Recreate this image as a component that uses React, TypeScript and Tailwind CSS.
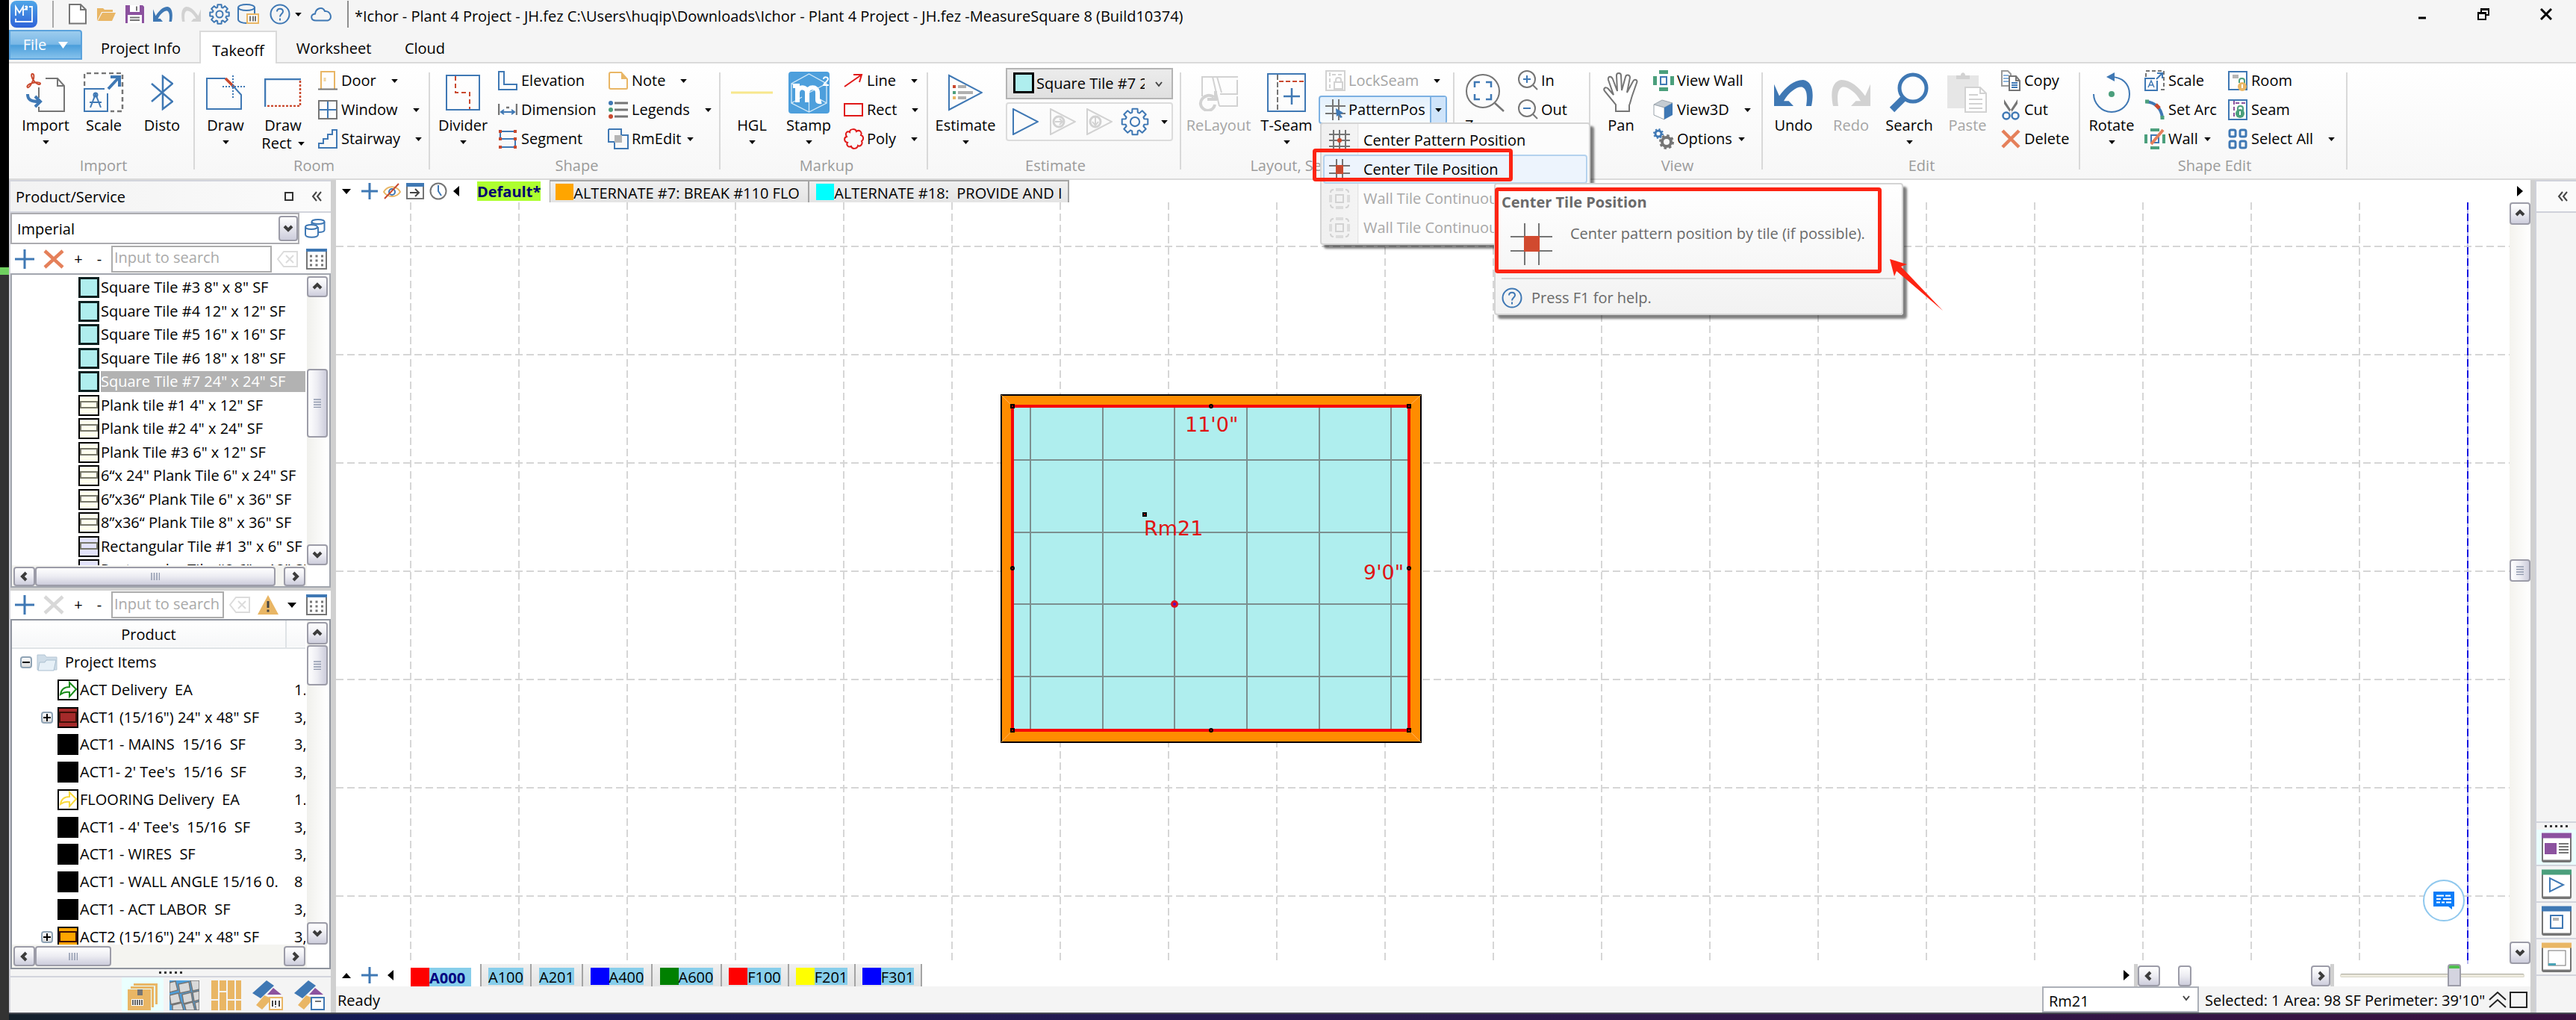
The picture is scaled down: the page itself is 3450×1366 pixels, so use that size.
import React from "react";
import clsx from "clsx";

const BLUE = "#3f78b4";
const GRAY = "#757575";
const RED = "#c9492e";
const TAN = "#e9b665";
const GREEN = "#4b9f7c";
const PURPLE = "#8c529f";
const PALE = "#d2d2d2";

type Kids = { children?: React.ReactNode };

function Icon({ w, h, children }: { w: number; h: number } & Kids) {
  return (
    <svg width={w} height={h} viewBox={`0 0 ${w} ${h}`} fill="none" stroke={BLUE} strokeWidth={2} aria-hidden="true" className="shrink-0">
      {children}
    </svg>
  );
}

function Caret({ dir = "down", big = false }: { dir?: "down" | "up" | "left" | "right"; big?: boolean }) {
  const d = { down: "M0 0H12L6 7Z", up: "M0 7H12L6 0Z", left: "M8 0V14L0 7Z", right: "M0 0V14L8 7Z" }[dir];
  const side = dir === "left" || dir === "right";
  const w = side ? 8 : 12;
  const h = side ? 14 : 7;
  return (
    <svg
      viewBox={`0 0 ${w} ${h}`}
      width={big || side ? w : 9}
      height={big || side ? h : 5}
      fill="black"
      aria-hidden="true"
      className="shrink-0"
    >
      <path d={d} />
    </svg>
  );
}

/* ---------- title bar icons ---------- */

const Logo = () => (
  <svg width="36" height="36" viewBox="0 0 36 36" aria-hidden="true" className="shrink-0">
    <defs>
      <linearGradient id="logo" x1="0" y1="0" x2="0" y2="1">
        <stop offset="0" stopColor="#4fa6e8" />
        <stop offset="1" stopColor="#2f63d8" />
      </linearGradient>
    </defs>
    <rect width="36" height="36" rx="8" fill="url(#logo)" />
    <path d="M7 20V8l5 8 5-8v12M25 8h4v20H7v-4M19.500 8.500q2-2 3 0 0 1-3 3h3.500" fill="none" stroke="white" strokeWidth="1.800" />
  </svg>
);
const NewFile = () => (
  <Icon w={24} h={28}>
    <path d="M1 1h15l7 7v18.500H1ZM16 1v7h7" stroke={GRAY} fill="white" />
  </Icon>
);
const OpenFolder = () => (
  <Icon w={27} h={20}>
    <path d="M1 19V2h8l2 2h11v3H7Z" fill={TAN} stroke="none" />
    <path d="M8 8h18l-5 11H2Z" fill={TAN} stroke="none" />
  </Icon>
);
const Save = () => (
  <Icon w={25} h={26}>
    <path d="M0 1h23l2 2v22H0Z" fill={PURPLE} stroke="none" />
    <path d="M6 1h13v9H6ZM3 14h19v11H3Z" fill="white" stroke="none" />
    <path d="M15 2.500v6M6 17.500h13M6 21h13" stroke={GRAY} />
  </Icon>
);
const CurvedArrow = ({ color, flip, w = 26, h = 20 }: { color: string; flip?: boolean; w?: number; h?: number }) => (
  <svg width={w} height={h} viewBox="0 0 26 18" preserveAspectRatio="none" aria-hidden="true" className={clsx("shrink-0", flip && "-scale-x-100")}>
    <path d="M0 3v15h13l-3.200-3.500-3.300 0C10 8 16 4 19 5c3 1.500 3.500 6 2.500 13H25C27 8 25.500 1 19.500 0 13 0 8 5 3.500 11Z" fill={color} />
  </svg>
);
const GearIcon = ({ size = 28, sw = 2 }: { size?: number; sw?: number }) => {
  const pts: string[] = [];
  for (let i = 0; i < 8; i++) {
    const a = (i * Math.PI) / 4;
    [[-0.3, 9.5], [-0.2, 13], [0.2, 13], [0.3, 9.5]].forEach(([o, r]) => {
      pts.push(`${(14 + r * Math.sin(a + o)).toFixed(2)} ${(14 - r * Math.cos(a + o)).toFixed(2)}`);
    });
  }
  return (
    <svg width={size} height={size} viewBox="0 0 28 28" fill="none" stroke={BLUE} strokeWidth={sw} strokeLinejoin="round" aria-hidden="true" className="shrink-0">
      <path d={`M${pts.join("L")}Z`} />
      <circle cx="14" cy="14" r="4.500" />
    </svg>
  );
};
const DbBar = () => (
  <Icon w={29} h={28}>
    <ellipse cx="12" cy="5" rx="11" ry="4" />
    <path d="M1 5v16c0 3 5 5 11 5M23 5v8" />
    <rect x="13" y="14" width="15" height="12" stroke={TAN} fill="white" />
    <path d="M17 16.500v7M21 16.500v7M24 16.500v7" stroke="#444" strokeWidth="1.500" />
  </Icon>
);
const HelpIcon = () => (
  <Icon w={28} h={28}>
    <circle cx="14" cy="14" r="12.500" />
    <path d="M10 10.500c0-5 8-5 8 0 0 3-4 3-4 7M14 19.500v3" />
  </Icon>
);
const CloudIcon = () => (
  <Icon w={29} h={20}>
    <path d="M7 18.500c-7 0-8-8-1-9C7 2 16-1 19 6c8-1 11 11 4 12.500Z" />
  </Icon>
);

/* ---------- ribbon icons, large ---------- */

const big = {
  import: (
    <Icon w={52} h={54}>
      <path d="M26 8h16l9 10v34H17V46M42 8v10h9M17 20v14" stroke={GRAY} />
      <path d="M8 2c3-1 3 5 1 9-2 5-5 10-7 9s1-5 7-6c5-1 10-1 10 1s-5 1-8-3c-3-3-5-9-3-10Z" stroke={RED} />
      <path d="M2 29c0 8 5 10 15 10M12 32l7 7-7 7" stroke={BLUE} strokeWidth="4" />
    </Icon>
  ),
  scale: (
    <Icon w={54} h={54}>
      <path d="M1 18V1h51v51H36" stroke={GRAY} strokeWidth="2.500" strokeDasharray="6 4" />
      <path d="M28 22H1v30h31V28" />
      <path d="M33 22 46 8M36 6h12v13" strokeWidth="4" />
      <path d="m9 47 7-18 7 18M8 40h16" />
      <circle cx="16" cy="30" r="2.500" />
    </Icon>
  ),
  disto: (
    <Icon w={30} h={48}>
      <path d="M1 12 29 36 16 46V2l13 10L1 36" strokeWidth="2.500" />
    </Icon>
  ),
  draw: (
    <Icon w={52} h={48}>
      <path d="M26 5H1v41h46V27L36 15" />
      <path d="m26 5 11 11" stroke={RED} strokeWidth="3.500" />
      <path d="M36 1v30M22 16h30" strokeDasharray="2 2" />
    </Icon>
  ),
  drawRect: (
    <Icon w={50} h={38}>
      <path d="M1 38V1h48" strokeWidth="2.500" />
      <path d="M48 3v34H2" stroke={RED} strokeWidth="2.500" strokeDasharray="3 2" />
    </Icon>
  ),
  divider: (
    <Icon w={46} h={48}>
      <rect x="1" y="1" width="44" height="46" />
      <path d="M13 2v22h19v22" stroke={RED} strokeDasharray="6 4" />
    </Icon>
  ),
  hgl: (
    <Icon w={56} h={4}>
      <path d="M0 2h56" stroke="#f7e78c" strokeWidth="3" />
    </Icon>
  ),
  stamp: (
    <svg width="55" height="56" viewBox="0 0 55 56" aria-hidden="true">
      <rect width="55" height="56" rx="4" fill="#4d9fdc" />
      <path d="M27.500 3 51 16v26L27.500 54 4 42V16ZM4 16l23.500 12L51 16M27.500 28v26M4 42l14-8M51 42l-14-8" fill="none" stroke="#d6ebf9" strokeWidth="1.300" />
      <path d="M6 19h6v22M12 28c1-9 13-9 13 0v13M25 28c1-9 14-9 14 0v10q0 3 5 2" fill="none" stroke="white" strokeWidth="6" />
      <path d="M47 10c0-4 6-3 6 0 0 2-5 5-6 8h7" fill="none" stroke="white" strokeWidth="2" />
    </svg>
  ),
  estimate: (
    <Icon w={46} h={50}>
      <path d="M1 2v46l44-23Z" />
      <path d="M6 17h4" stroke={RED} strokeWidth="4" />
      <path d="M6 25h4" stroke={GREEN} strokeWidth="4" />
      <path d="M6 32h4" stroke={TAN} strokeWidth="4" />
      <path d="M13 17h11M13 25h20M13 32h11" stroke="#b0b0b0" strokeWidth="4" />
    </Icon>
  ),
  relayout: (
    <Icon w={56} h={50}>
      <path d="M6 30V4h48M20 4l9 39M30 27h23V8M26 4l6 21M29 43h25M53 30v13" stroke={PALE} />
      <path d="M22 31c-12-8-25 8-14 16 7 5 14 0 15-6M13 34h11V23" stroke={PALE} strokeWidth="4" />
    </Icon>
  ),
  tseam: (
    <Icon w={52} h={52}>
      <rect x="1" y="1" width="50" height="50" />
      <path d="M14 2v48" stroke={GRAY} strokeDasharray="7 3" />
      <path d="M16 11h35" stroke={RED} strokeDasharray="6 3" />
      <path d="M22 31h22M33 20v22" strokeWidth="2.500" />
    </Icon>
  ),
  zoom: (
    <Icon w={54} h={54}>
      <circle cx="24" cy="25" r="22" stroke={GRAY} />
      <path d="m40 41 12 11" stroke={GRAY} strokeWidth="2.500" />
      <path d="M13 20v-7h7M28 13h7v7M35 29v7h-7M20 36h-7v-7" strokeWidth="2.500" />
    </Icon>
  ),
  pan: (
    <Icon w={50} h={54}>
      <path
        d="M18 52V43L4 26c-4-4 0-8 4-4l7 8L8 10c-1-5 4-6 6-1l6 16L19 4c0-4 6-4 6 0l1 20L31 6c1-4 6-3 6 1l-4 20 8-15c2-4 7-2 5 2l-6 17c-2 6-2 8-4 13v8Z"
        stroke={GRAY}
        fill="white"
      />
    </Icon>
  ),
  search: (
    <Icon w={54} h={54}>
      <circle cx="32" cy="21" r="18" strokeWidth="5" />
      <path d="M20 34 4 50" strokeWidth="9" />
    </Icon>
  ),
  paste: (
    <Icon w={54} h={54}>
      <path d="M0 4h42v44H0Z" fill="#e6e6e6" stroke="none" />
      <path d="M12 9V4h6c0-5 6-5 6 0h6v5Z" fill={PALE} stroke="none" />
      <path d="M24 20h20l8 8v25H24ZM44 20v8h8M29 30h12M29 36h18M29 42h18M29 48h18" stroke={PALE} fill="white" />
    </Icon>
  ),
  rotate: (
    <Icon w={50} h={54}>
      <path d="M1 29C1 41 11 53 25 53c13 0 24-10 24-24C49 15 39 6 24 6" />
      <path d="M29 0v12l-11-6Z" fill={BLUE} stroke="none" />
      <circle cx="25" cy="29" r="4" fill={GREEN} stroke="none" />
    </Icon>
  ),
};

/* ---------- ribbon icons, small ---------- */

const cross = (c: string, w = 26) => (
  <Icon w={w} h={26}>
    <path d={`M2 2 ${w - 2} 24M${w - 2} 2 2 24`} stroke={c} strokeWidth="4.500" />
  </Icon>
);

const hash = (
  <g stroke={GRAY}>
    <path d="M10 0v28M18 0v28M0 9h28M0 19h28" />
  </g>
);

const small = {
  door: (
    <Icon w={26} h={26}>
      <path d="M4 24V1h18v23" stroke={TAN} />
      <path d="M9 9v5" stroke="#f0d5a2" strokeWidth="3" />
      <path d="M0 24.500h26" stroke={GRAY} />
    </Icon>
  ),
  window: (
    <Icon w={26} h={26}>
      <path d="M13 1v24M1 13h24" />
      <rect x="1" y="1" width="24" height="24" stroke={GRAY} />
    </Icon>
  ),
  stair: (
    <Icon w={26} h={26}>
      <path d="M1 25V19h6v-6h6V7h6V1h6v24Z" />
    </Icon>
  ),
  elevation: (
    <Icon w={26} h={26}>
      <path d="M1 1h7v17h17v7H1Z" />
    </Icon>
  ),
  dimension: (
    <Icon w={26} h={16}>
      <path d="M1 0v15M25 0v15M11 5h4" stroke={GRAY} strokeWidth="2.500" />
      <path d="M5 11h16M8 8l-4 3 4 3M18 8l4 3-4 3" />
    </Icon>
  ),
  segment: (
    <Icon w={26} h={26}>
      <path d="M23 3H3v10h20v11H3" />
      <path d="M1 3h4M21 3h4M1 13h4M21 13h4M1 24h4M21 24h4" stroke={RED} strokeWidth="4" />
    </Icon>
  ),
  note: (
    <Icon w={26} h={24}>
      <path d="M4 1h13l8 9v12a1 1 0 0 1-1 1H3a2 2 0 0 1-2-2V3a2 2 0 0 1 2-2Z" stroke={TAN} />
      <path d="M17 1v9h8Z" fill={TAN} stroke="none" />
    </Icon>
  ),
  legends: (
    <Icon w={26} h={26}>
      <path d="M8 4h18M8 13h18M8 22h18" stroke={GRAY} strokeWidth="3" />
      <circle cx="3" cy="4" r="3" fill={BLUE} stroke="none" />
      <circle cx="3" cy="13" r="3" fill={GREEN} stroke="none" />
      <circle cx="3" cy="22" r="3" fill={RED} stroke="none" />
    </Icon>
  ),
  rmedit: (
    <Icon w={28} h={28}>
      <path d="M1 1h17v8M1 1v17h8M18 9h9v18H9v-9" />
      <rect x="9" y="9" width="10" height="10" fill="#b5b5b5" stroke="none" />
    </Icon>
  ),
  line: (
    <Icon w={26} h={20}>
      <path d="M1 18 24 2M13 2h11l-3 10" stroke="#e01818" />
    </Icon>
  ),
  rect: (
    <Icon w={26} h={20}>
      <rect x="1" y="2" width="24" height="16" stroke="#e01818" />
    </Icon>
  ),
  poly: (
    <Icon w={28} h={28}>
      <path
        d="M9 5c0-5 8-5 9-1 4-3 8 1 6 5 4 1 4 6 1 8 2 4-2 8-5 6-1 5-8 5-9 1-4 2-7-2-5-5-5-1-5-7-1-8-3-5 1-8 4-6Z"
        stroke="#e01818"
      />
    </Icon>
  ),
  lock: (
    <Icon w={27} h={28}>
      <rect x="1" y="1" width="25" height="26" stroke={PALE} />
      <path d="M6 3v22M9 6h15" stroke={PALE} strokeDasharray="5 3" />
      <path d="M12 16h11v9H12ZM14 16v-3c0-4 7-4 7 0v3" stroke={PALE} />
    </Icon>
  ),
  pattern: (
    <Icon w={27} h={28}>
      {hash}
      <path d="m14 12 10 6-4 2 3 4-3 1-2-4-3 2Z" fill={BLUE} stroke="none" />
    </Icon>
  ),
  centerPattern: (
    <Icon w={28} h={28}>
      <path d="M6 0v28M14 0v28M22 0v28M0 6h28M0 14h28M0 22h28" stroke={GRAY} />
      <circle cx="14" cy="14" r="3" fill={RED} stroke="none" />
    </Icon>
  ),
  centerTile: (
    <Icon w={28} h={28}>
      {hash}
      <rect x="9" y="8" width="10" height="12" fill={RED} stroke="none" />
    </Icon>
  ),
  wallTile: (
    <Icon w={28} h={28}>
      <rect x="9" y="9" width="10" height="10" stroke={PALE} />
      <path d="M9 2h10M9 26h10M2 9v10M26 9v10" stroke="#dcdcdc" strokeWidth="4" />
      <path d="M2 6c0-3 2-4 4-4M22 2c3 0 4 2 4 4M26 22c0 3-2 4-4 4M6 26c-3 0-4-2-4-4" stroke={PALE} />
    </Icon>
  ),
  zoomIn: (
    <Icon w={27} h={28}>
      <circle cx="12" cy="12" r="11" stroke={GRAY} />
      <path d="m20 20 6 6" stroke={GRAY} />
      <path d="M7 12h10M12 7v10" />
    </Icon>
  ),
  zoomOut: (
    <Icon w={27} h={28}>
      <circle cx="12" cy="12" r="11" stroke={GRAY} />
      <path d="m20 20 6 6" stroke={GRAY} />
      <path d="M7 12h10" />
    </Icon>
  ),
  viewWall: (
    <Icon w={28} h={28}>
      <rect x="10" y="9" width="8" height="10" />
      <path d="M8 2.500h12M8 25.500h12" stroke={GREEN} strokeWidth="5" />
      <path d="M2.500 8v12M25.500 8v12" stroke={GREEN} strokeWidth="5" />
    </Icon>
  ),
  view3d: (
    <Icon w={28} h={28}>
      <path d="M1 7 12 1l14 4-11 6Z" fill="#c5ccd2" stroke="#9aa4ac" strokeWidth="1" />
      <path d="M1 7l14 4v16L1 21Z" fill="white" stroke="#9aa4ac" strokeWidth="1" />
      <path d="M15 11 26 5v16l-11 6Z" fill={BLUE} stroke="none" />
    </Icon>
  ),
  options: (
    <Icon w={28} h={28}>
      <circle cx="7" cy="7" r="4" strokeWidth="3" />
      <circle cx="7" cy="7" r="6" strokeWidth="2" strokeDasharray="2 2.700" />
      <circle cx="18" cy="18" r="6" stroke={GRAY} strokeWidth="4" />
      <circle cx="18" cy="18" r="8.500" stroke={GRAY} strokeWidth="3" strokeDasharray="3.400 3.275" />
    </Icon>
  ),
  copy: (
    <Icon w={27} h={28}>
      <path d="M1 1h8l4 4v16H1Z" stroke="#9a9a9a" fill="white" />
      <path d="M3 7h7M3 11h7M3 15h7" stroke="#8db4dc" />
      <path d="M11 8h9l5 6v13H11ZM20 8v6h5" stroke={GRAY} fill="white" />
      <path d="M14 17h8M14 20h8M14 23h8" />
    </Icon>
  ),
  cut: (
    <Icon w={26} h={28}>
      <path d="M4 0v6l9 13 2-2ZM22 0v6l-9 13-2-2Z" fill={GRAY} stroke="none" />
      <circle cx="7" cy="22" r="4.500" strokeWidth="2.500" />
      <circle cx="19" cy="22" r="4.500" strokeWidth="2.500" />
    </Icon>
  ),
  scale: (
    <Icon w={28} h={28}>
      <path d="M2 9V1h24v25h-7" stroke={GRAY} strokeDasharray="5 3" />
      <path d="M14 11H1v16h16V14M16 12l8-8M17 4h7v7" />
      <path d="m5 23 4-9 4 9M6.500 20h5" strokeWidth="1.500" />
    </Icon>
  ),
  arc: (
    <Icon w={28} h={28}>
      <path d="M2 3c12 1 21 9 22 22" strokeWidth="4" />
      <path d="M1 3h5M24 22v5" stroke={GREEN} strokeWidth="5" />
      <path d="m15 7 5 5" stroke={RED} strokeWidth="5" />
    </Icon>
  ),
  wall: (
    <Icon w={28} h={28}>
      <rect x="9" y="9" width="10" height="10" />
      <path d="M8 2h12M8 26h12" stroke={GREEN} strokeWidth="4" />
      <path d="M2 8v12M26 8v12" stroke={GREEN} strokeWidth="4" />
      <path d="M9 21 25 2" stroke="#e5805a" strokeWidth="4" />
    </Icon>
  ),
  room: (
    <Icon w={26} h={28}>
      <rect x="1" y="2" width="24" height="24" />
      <rect x="6" y="6" width="8" height="5" fill="#b5b5b5" stroke="none" />
      <path d="M15 17v-3c0-4 7-4 7 0v4" stroke={GREEN} />
      <circle cx="19" cy="22" r="6" fill={TAN} stroke="none" />
      <path d="M19 19v5" stroke="white" />
    </Icon>
  ),
  seam: (
    <Icon w={26} h={28}>
      <rect x="1" y="1" width="24" height="26" />
      <path d="M8 2v24M10 5h14" stroke={PURPLE} strokeDasharray="5 3" />
      <path d="M13 15v-3c0-4 7-4 7 0v4" stroke={GREEN} />
      <circle cx="16" cy="19" r="6" fill={GREEN} stroke="none" />
      <path d="M16 16v5" stroke="white" />
    </Icon>
  ),
  selectAll: (
    <Icon w={28} h={28}>
      <g strokeWidth="3">
        <rect x="3" y="2" width="8" height="9" rx="2" />
        <rect x="17" y="2" width="8" height="9" rx="2" />
        <rect x="3" y="17" width="8" height="9" rx="2" />
        <rect x="17" y="17" width="8" height="9" rx="2" />
      </g>
    </Icon>
  ),
};

/* ---------- ribbon parts ---------- */

function Group({ label, className, labelClass, children }: { label?: string; className?: string; labelClass?: string } & Kids) {
  return (
    <>
      <section className={clsx("flex shrink-0 flex-col pt-1", className)}>
        <div className="flex h-[119px]">{children}</div>
        <div className={clsx("h-7 text-center leading-7 text-[#9b9b9b]", labelClass)}>{label}</div>
      </section>
      <div className="my-3 w-0.5 shrink-0 bg-[#d9d9d9]" />
    </>
  );
}

function Big({ icon, label, second, caret, className, muted }: { icon: React.ReactNode; label: string; second?: string; caret?: boolean; className: string; muted?: boolean }) {
  return (
    <button className={clsx("flex shrink-0 flex-col items-center pt-[5px]", className, muted && "text-[#a5a5a5]")}>
      <span className="flex h-15 items-center justify-center">{icon}</span>
      <span className="leading-7">{label}</span>
      {second && (
        <span className="flex items-center gap-2 leading-5">
          {second}
          <Caret />
        </span>
      )}
      {caret && (
        <span className="flex h-4 items-center">
          <Caret />
        </span>
      )}
    </button>
  );
}

function Small({ icon, label, caret, muted }: { icon: React.ReactNode; label: string; caret?: "near" | "far"; muted?: boolean }) {
  return (
    <button className={clsx("flex h-[38px] items-center whitespace-nowrap", muted && "text-[#a5a5a5]")}>
      <span className="mr-1 flex w-7 shrink-0 items-center justify-center">{icon}</span>
      {label}
      {caret && (
        <span className={caret === "near" ? "ml-2" : "ml-5"}>
          <Caret />
        </span>
      )}
    </button>
  );
}

const Col = ({ className, children }: { className?: string } & Kids) => <div className={clsx("flex shrink-0 flex-col items-start gap-px", className)}>{children}</div>;

function PatternMenu() {
  const items = [
    { icon: small.centerPattern, label: "Center Pattern Position" },
    { icon: small.centerTile, label: "Center Tile Position", active: true },
    { icon: small.wallTile, label: "Wall Tile Continuous", off: true },
    { icon: small.wallTile, label: "Wall Tile Continuous", off: true },
  ];
  return (
    <div className="absolute top-full left-0 z-20 w-[362px] rounded-sm border-2 border-[#d4d4d4] bg-[linear-gradient(to_right,#f0f0f0_0px,#f4f4f4_48px,#dcdcdc_48px,#fcfcfc_50px)] shadow-[5px_5px_3px_rgba(0,0,0,0.5)]">
      <ul className="p-0.5">
        {items.map((it, i) => (
          <li key={i} className="relative">
            <button
              disabled={it.off}
              className={clsx(
                "flex h-[39px] w-full items-center rounded-sm border-2 pl-1.5 whitespace-nowrap",
                it.active ? "border-[#b4d2ee] bg-[#edf4fd]" : "border-transparent",
                it.off && "text-[#a8a8a8]",
              )}
            >
              <span className="mr-[18px]">{it.icon}</span>
              {it.label}
            </button>
            {it.active && <div className="pointer-events-none absolute -top-2 -left-3.5 h-11 w-[268px] rounded-sm border-[5px] border-[#fd2413]" />}
          </li>
        ))}
      </ul>
      <PatternTooltip />
    </div>
  );
}

function PatternTooltip() {
  return (
    <div
      role="tooltip"
      className="absolute top-[79px] left-[231px] w-[548px] rounded-sm border-2 border-[#d4d4d4] bg-linear-to-b from-white to-[#f2f2f2] text-[#6a6a6a] shadow-[5px_5px_3px_rgba(0,0,0,0.5)]"
    >
      <div className="h-[125px] px-2 pt-2.5">
        <p className="leading-7 font-bold">Center Tile Position</p>
        <div className="flex items-start px-3 pt-3.5">
          <Icon w={56} h={56}>
            <path d="M19 0v56M38 0v56M0 18h56M0 37h56" stroke={GRAY} />
            <rect x="18" y="17" width="21" height="21" fill="#d14a2f" stroke="none" />
          </Icon>
          <span className="ml-6 leading-7 whitespace-nowrap">Center pattern position by tile (if possible).</span>
        </div>
      </div>
      <div className="mx-2 border-t-2 border-[#d6d6d6]" />
      <div className="flex h-[46px] items-center gap-3 px-2 pt-1">
        <HelpIcon />
        Press F1 for help.
      </div>
      <div className="pointer-events-none absolute top-1 -left-px h-[115px] w-[518px] rounded-sm border-[5px] border-[#fd2413]" />
      <svg width="78" height="74" viewBox="0 0 78 74" className="absolute top-[98px] left-[526px]" aria-hidden="true">
        <path d="M2 2 25 9l-8 3 56 59L11 18l-3 7Z" fill="#fd2413" />
      </svg>
    </div>
  );
}

const arrowCircle = (d: string) => (
  <Icon w={35} h={36}>
    <path d="M1 1v34l33-17Z" stroke={PALE} />
    <circle cx="12" cy="18" r="7" stroke={PALE} strokeWidth="3" />
    <path d={d} stroke={PALE} />
  </Icon>
);

function Ribbon() {
  return (
    <div className="relative z-20 flex h-[158px] shrink-0 border-y-2 border-[#dadada] bg-linear-to-b from-white to-[#f7f7f7]">
      <Group label="Import" className="w-[247px] pl-1.5">
        <Big className="w-[86px]" icon={big.import} label="Import" caret />
        <Big className="w-[70px]" icon={big.scale} label="Scale" />
        <Big className="w-[86px]" icon={big.disto} label="Disto" />
      </Group>
      <Group label="Room" className="w-[313px] pl-1.5">
        <Big className="w-[70px]" icon={big.draw} label="Draw" caret />
        <Big className="w-[84px]" icon={big.drawRect} label="Draw" second="Rect" />
        <Col className="ml-1">
          <Small icon={small.door} label="Door" caret="far" />
          <Small icon={small.window} label="Window" caret="far" />
          <Small icon={small.stair} label="Stairway" caret="far" />
        </Col>
      </Group>
      <Group label="Shape" className="w-[387px] pl-1.5">
        <Big className="w-[76px]" icon={big.divider} label="Divider" caret />
        <Col className="ml-2 w-[148px]">
          <Small icon={small.elevation} label="Elevation" />
          <Small icon={small.dimension} label="Dimension" />
          <Small icon={small.segment} label="Segment" />
        </Col>
        <Col>
          <Small icon={small.note} label="Note" caret="far" />
          <Small icon={small.legends} label="Legends" caret="far" />
          <Small icon={small.rmedit} label="RmEdit" caret="near" />
        </Col>
      </Group>
      <Group label="Markup" className="w-[276px] pl-2">
        <Big className="w-[68px]" icon={big.hgl} label="HGL" caret />
        <Big className="w-[84px]" icon={big.stamp} label="Stamp" caret />
        <Col className="ml-1">
          <Small icon={small.line} label="Line" caret="far" />
          <Small icon={small.rect} label="Rect" caret="far" />
          <Small icon={small.poly} label="Poly" caret="far" />
        </Col>
      </Group>
      <Group label="Estimate" className="w-[337px] pl-1">
        <Big className="w-[92px]" icon={big.estimate} label="Estimate" caret />
        <div className="ml-2 flex w-[224px] flex-col gap-1 pt-0.5">
          <div className="relative h-[42px] border-2 border-[#b4b4b4] bg-linear-to-b from-[#ececec] to-[#e0e0e0]">
            <select aria-label="Product" className="h-full w-full appearance-none overflow-hidden pr-9 pl-[39px]">
              <option>Square Tile #7 24" x 24" SF</option>
            </select>
            <span className="pointer-events-none absolute top-1 left-2 h-7 w-7 border-[3px] border-black bg-[#afeeee]" />
            <span className="pointer-events-none absolute top-4 right-3">
              <Icon w={10} h={8}>
                <path d="m1 1 4 5 4-5" stroke="#444" />
              </Icon>
            </span>
          </div>
          <div className="flex h-[52px] items-center rounded-sm border-2 border-[#dcdcdc] pl-[7px]">
            <button aria-label="Run" className="w-[50px]">
              <Icon w={35} h={36}>
                <path d="M1 1v34l33-17Z" />
              </Icon>
            </button>
            <button aria-label="Run next" className="w-[49px]">{arrowCircle("M7 18h9M13 14l4 4-4 4")}</button>
            <button aria-label="Run down" className="w-[46px]">{arrowCircle("M12 12v10M8 18l4 5 4-5")}</button>
            <button aria-label="Estimate options" className="flex items-center gap-4">
              <GearIcon size={38} sw={1.5} />
              <Caret />
            </button>
          </div>
        </div>
      </Group>
      <Group label="Layout, Seam" className="w-[364px] pl-0.5" labelClass="pr-14">
        <Big className="w-[96px]" icon={big.relayout} label="ReLayout" muted />
        <Big className="w-[86px]" icon={big.tseam} label="T-Seam" caret />
        <Col>
          <div className="pl-2">
            <Small icon={small.lock} label="LockSeam" caret="far" muted />
          </div>
          <div className="relative flex h-[38px] w-[172px] rounded-sm border-2 border-[#7cb0e2] bg-linear-to-b from-[#e3f0fc] to-[#f8fcff]">
            <button className="flex w-[149px] items-center border-r-2 border-[#7cb0e2] pl-1.5 whitespace-nowrap">
              <span className="mr-1 flex w-7 justify-center">{small.pattern}</span>
              PatternPos
            </button>
            <button aria-label="Pattern position menu" className="flex flex-1 items-center justify-center bg-[#cfe4fa]">
              <Caret />
            </button>
            <PatternMenu />
          </div>
        </Col>
      </Group>
      <Group className="w-[180px] pl-1">
        <Big className="w-[74px]" icon={big.zoom} label="Zoom" />
        <Col className="ml-1.5">
          <Small icon={small.zoomIn} label="In" />
          <Small icon={small.zoomOut} label="Out" />
        </Col>
      </Group>
      <Group label="View" className="w-[229px] pl-1">
        <Big className="w-[74px]" icon={big.pan} label="Pan" />
        <Col className="ml-1.5">
          <Small icon={small.viewWall} label="View Wall" />
          <Small icon={small.view3d} label="View3D" caret="far" />
          <Small icon={small.options} label="Options" caret="near" />
        </Col>
      </Group>
      <Group label="Edit" className="w-[423px] pl-0.5">
        <Big className="w-[78px]" icon={<CurvedArrow color={BLUE} w={52} h={35} />} label="Undo" />
        <Big className="w-[76px]" icon={<CurvedArrow color={PALE} w={52} h={35} flip />} label="Redo" muted />
        <Big className="w-[80px]" icon={big.search} label="Search" caret />
        <Big className="w-[76px]" icon={big.paste} label="Paste" muted />
        <Col className="ml-1.5">
          <Small icon={small.copy} label="Copy" />
          <Small icon={small.cut} label="Cut" />
          <Small icon={cross("#e5805a")} label="Delete" />
        </Col>
      </Group>
      <Group label="Shape Edit" className="w-[356px] pl-1">
        <Big className="w-[76px]" icon={big.rotate} label="Rotate" caret />
        <Col className="ml-1.5 w-[111px]">
          <Small icon={small.scale} label="Scale" />
          <Small icon={small.arc} label="Set Arc" />
          <Small icon={small.wall} label="Wall" caret="near" />
        </Col>
        <Col>
          <Small icon={small.room} label="Room" />
          <Small icon={small.seam} label="Seam" />
          <Small icon={small.selectAll} label="Select All" caret="far" />
        </Col>
      </Group>
    </div>
  );
}

/* ---------- title and tabs ---------- */

function TitleBar() {
  const tools: [string, React.ReactNode][] = [
    ["New", <NewFile />],
    ["Open", <OpenFolder />],
    ["Save", <Save />],
    ["Undo", <CurvedArrow color={BLUE} />],
    ["Redo", <CurvedArrow color={PALE} flip />],
    ["Settings", <GearIcon />],
    ["Database", <DbBar />],
  ];
  return (
    <header className="flex h-[38px] shrink-0 items-center pl-0.5">
      <Logo />
      <div className="ml-5 h-9 w-0.5 bg-[#a9a9a9]" />
      <div className="ml-[13px] flex items-center">
        {tools.map(([n, i]) => (
          <button key={n} aria-label={n} className="flex w-[38px] justify-center">
            {i}
          </button>
        ))}
        <button aria-label="Help" className="flex w-[60px] items-center gap-1.5 pl-2.5">
          <HelpIcon />
          <Caret />
        </button>
        <button aria-label="Cloud" className="flex w-[38px] justify-center">
          <CloudIcon />
        </button>
      </div>
      <div className="ml-4 h-9 w-0.5 bg-[#8f8f8f]" />
      <h1 className="ml-2 pt-1.5 leading-7 whitespace-nowrap">
        *Ichor - Plant 4 Project - JH.fez C:\Users\huqip\Downloads\Ichor - Plant 4 Project - JH.fez -MeasureSquare 8 (Build10374)
      </h1>
      <div className="ml-auto flex items-center gap-[68px] pr-8">
        <button aria-label="Minimize">
          <Icon w={12} h={16}>
            <path d="M1 13h10" stroke="black" strokeWidth="3" />
          </Icon>
        </button>
        <button aria-label="Restore">
          <Icon w={16} h={16}>
            <path d="M5 5V1h10v8h-4M5 2h10" stroke="black" />
            <path d="M1 6h10v9H1ZM1 7h10" stroke="black" />
          </Icon>
        </button>
        <button aria-label="Close">
          <Icon w={16} h={16}>
            <path d="m1 1 14 14M15 1 1 15" stroke="black" strokeWidth="3" />
          </Icon>
        </button>
      </div>
    </header>
  );
}

function Tabs() {
  return (
    <nav className="flex h-[45px] shrink-0 items-end">
      <button className="mb-[3px] flex h-10 w-[98px] items-center justify-center gap-4 rounded-tr-sm border-2 border-[#5aa2dc] bg-[linear-gradient(#9cccee_0%,#7ab8e6_48%,#4a9edb_52%,#86c2ec_100%)] text-white">
        File
        <svg width="13" height="9" viewBox="0 0 13 9" fill="white" aria-hidden="true">
          <path d="M0 0h13L6.500 9Z" />
        </svg>
      </button>
      <button className="h-10 w-[157px] pt-1">Project Info</button>
      <button className="relative z-30 -mb-0.5 h-11 w-[104px] border-2 border-b-0 border-[#dadada] bg-white pt-2">Takeoff</button>
      <button className="h-10 w-[152px] pt-1">Worksheet</button>
      <button className="h-10 w-[92px] pt-1">Cloud</button>
    </nav>
  );
}

/* ---------- scroll bars ---------- */

const chev = { up: "m3 9 5-5 5 5", down: "m3 4 5 5 5-5", left: "m9 2-5 5 5 5", right: "m5 2 5 5-5 5" };

function ScrollButton({ dir, className }: { dir: keyof typeof chev; className?: string }) {
  return (
    <button
      aria-label={`Scroll ${dir}`}
      className={clsx("flex shrink-0 items-center justify-center rounded-sm border-2 border-[#9c9ca8] bg-linear-to-b from-white via-[#ececf2] to-[#cdcddc]", className)}
    >
      <Icon w={dir === "left" || dir === "right" ? 14 : 16} h={14}>
        <path d={chev[dir]} stroke="#3c3c3c" strokeWidth="4" />
      </Icon>
    </button>
  );
}

function Thumb({ vertical, grip = true, className }: { vertical?: boolean; grip?: boolean; className: string }) {
  return (
    <div
      className={clsx(
        "flex shrink-0 items-center justify-center rounded-sm border-2 border-[#9c9ca8] from-white via-[#ececf2] to-[#cdcddc]",
        vertical ? "bg-linear-to-r" : "bg-linear-to-b",
        className,
      )}
    >
      {grip && (
        <Icon w={12} h={12}>
          <path d={vertical ? "M1 1h10M1 4.500h10M1 8h10M1 11.500h10" : "M1 1v10M4.500 1v10M8 1v10M11.500 1v10"} stroke="#8f98ad" strokeWidth="1.500" />
        </Icon>
      )}
    </div>
  );
}

/* ---------- left panel ---------- */

const AddButton = () => (
  <button aria-label="Add" className="flex w-[38px] justify-center">
    <Icon w={26} h={26}>
      <path d="M13 0v26M0 13h26" strokeWidth="3" />
    </Icon>
  </button>
);
const ClearButton = () => (
  <button aria-label="Clear search" className="flex w-[41px] justify-center">
    <Icon w={28} h={22}>
      <path d="M1 11 9 1h18v20H9ZM12 6l10 10M22 6 12 16" stroke="#dcdcdc" />
    </Icon>
  </button>
);
const TableButton = () => (
  <button aria-label="Table view" className="flex w-[38px] justify-center">
    <Icon w={28} h={28}>
      <path d="M1 3v24h26V3" stroke={GRAY} fill="white" />
      <path d="M0 2h28" strokeWidth="4" />
      <path d="M5 10h18M5 16h18M5 22h18" stroke={GRAY} strokeWidth="3" strokeDasharray="3 4.500" />
    </Icon>
  </button>
);
const searchClass = "ml-0.5 h-9 min-w-0 flex-1 border-2 border-[#acacac] bg-white px-0.5 pb-1 placeholder:text-[#a9a9a9]";

function Swatch({ kind }: { kind: string }) {
  if (kind === "tile") return <span className="h-7 w-7 shrink-0 border-[3px] border-[#0c2020] bg-[#afeeee]" />;
  if (kind === "black") return <span className="h-7 w-7 shrink-0 bg-black" />;
  if (kind === "green" || kind === "yellow")
    return (
      <span className="h-7 w-7 shrink-0 border-2 border-black bg-white">
        <Icon w={24} h={24}>
          <path d="M2 18c1-7 5-10 12-10V2l9 9-9 10v-6c-5-1-8 0-12 3Z" stroke={kind === "green" ? "#188a18" : "#f7d83a"} />
        </Icon>
      </span>
    );
  const fills: Record<string, string> = { plank: "#ffffee", rect: "#e2e2fa", brown: "#a52a2a", orange: "#ffa500" };
  const dark = kind === "brown" || kind === "orange";
  return (
    <Icon w={28} h={28}>
      <rect x="1" y="1" width="26" height="26" fill={fills[kind]} stroke="black" />
      <rect x="3" y={dark ? 7 : 9} width="22" height={dark ? 13 : 8} stroke={dark ? "#401008" : "#77776a"} />
    </Icon>
  );
}

const catalog: [string, string][] = [
  ["tile", 'Square Tile #3 8" x 8" SF'],
  ["tile", 'Square Tile #4 12" x 12" SF'],
  ["tile", 'Square Tile #5 16" x 16" SF'],
  ["tile", 'Square Tile #6 18" x 18" SF'],
  ["tile", 'Square Tile #7 24" x 24" SF'],
  ["plank", 'Plank tile #1 4" x 12" SF'],
  ["plank", 'Plank tile #2 4" x 24" SF'],
  ["plank", 'Plank Tile #3 6" x 12" SF'],
  ["plank", '6“x 24" Plank Tile 6" x 24" SF'],
  ["plank", '6”x36“ Plank Tile 6" x 36" SF'],
  ["plank", '8”x36“ Plank Tile 8" x 36" SF'],
  ["rect", 'Rectangular Tile #1 3" x 6" SF'],
  ["rect", 'Rectangular Tile #2 6" x 12" SF'],
];

const items: [string, string, string][] = [
  ["green", "ACT Delivery  EA", "1."],
  ["brown", 'ACT1 (15/16") 24" x 48" SF', "3,"],
  ["black", "ACT1 - MAINS  15/16  SF", "3,"],
  ["black", "ACT1- 2' Tee's  15/16  SF", "3,"],
  ["yellow", "FLOORING Delivery  EA", "1."],
  ["black", "ACT1 - 4' Tee's  15/16  SF", "3,"],
  ["black", "ACT1 - WIRES  SF", "3,"],
  ["black", "ACT1 - WALL ANGLE 15/16 0.", "8"],
  ["black", "ACT1 - ACT LABOR  SF", "3,"],
  ["orange", 'ACT2 (15/16") 24" x 48" SF', "3,"],
];

function Expander({ open }: { open?: boolean }) {
  return (
    <button
      aria-label={open ? "Collapse" : "Expand"}
      className="flex h-4 w-4 shrink-0 items-center justify-center rounded-sm border-2 border-[#8fa3b5] bg-linear-to-b from-white to-[#dcdcdc]"
    >
      <Icon w={10} h={10}>
        <path d={open ? "M0 5h10" : "M0 5h10M5 0v10"} stroke="black" />
      </Icon>
    </button>
  );
}

const PanelChevrons = () => (
  <Icon w={14} h={14}>
    <path d="M7 1 2 7l5 6M13 1 8 7l5 6" stroke="#444" />
  </Icon>
);

function LeftPanel() {
  return (
    <aside className="flex w-[431px] shrink-0 flex-col border-l-2 border-[#d4d4dc] bg-white">
      <div className="flex h-11 shrink-0 items-center border-y-2 border-[#d2d4dc] bg-linear-to-r from-[#f2f2f2] to-[#fbfbfb] pr-3 pl-[7px]">
        <h2 className="flex-1 pt-0.5">Product/Service</h2>
        <button aria-label="Maximize panel" className="mr-6 h-3 w-3 border-2 border-[#333]" />
        <button aria-label="Collapse panel">
          <PanelChevrons />
        </button>
      </div>
      <div className="flex h-[42px] shrink-0 items-center">
        <div className="relative h-full flex-1">
          <select aria-label="Unit system" className="h-full w-full appearance-none border-2 border-[#acacb0] bg-white pt-0.5 pl-[7px]">
            <option>Imperial</option>
          </select>
          <span className="pointer-events-none absolute top-1 right-0.5 flex h-[34px] w-[26px] items-center justify-center rounded-sm border-2 border-[#9c9ca8] bg-linear-to-b from-white to-[#cdcddc]">
            <Icon w={16} h={14}>
              <path d={chev.down} stroke="#3c3c3c" strokeWidth="4" />
            </Icon>
          </span>
        </div>
        <button aria-label="Databases" className="flex w-[42px] justify-center">
          <Icon w={28} h={26}>
            <ellipse cx="18" cy="4" rx="8.500" ry="3" />
            <path d="M9.500 4v3M26.500 4v11c0 2-3 3-8 3" />
            <ellipse cx="9" cy="11" rx="8" ry="3" />
            <path d="M1 11v10c0 5 17 5 17 0V11" />
          </Icon>
        </button>
      </div>
      <div className="flex h-[39px] shrink-0 items-center">
        <AddButton />
        <button aria-label="Remove" className="flex w-[39px] justify-center">{cross("#e5805a", 28)}</button>
        <button aria-label="Expand all" className="w-7">+</button>
        <button aria-label="Collapse all" className="w-7">-</button>
        <input aria-label="Search catalog" placeholder="Input to search" className={searchClass} />
        <ClearButton />
        <TableButton />
      </div>
      <div className="flex h-[421px] shrink-0 flex-col border-2 border-[#a2a6ae]">
        <div className="flex min-h-0 flex-1">
          <ul className="flex-1 overflow-hidden pt-px pl-[89px]">
            {catalog.map(([k, t]) => (
              <li key={t} className="flex h-8 items-center even:h-[31px]">
                <Swatch kind={k} />
                <span className={clsx("ml-0.5 flex-1 leading-7 whitespace-nowrap", t.includes("#7") && "bg-[#b2b2b2] text-white")}>{t}</span>
              </li>
            ))}
          </ul>
          <div className="mr-0.5 ml-0.5 flex w-7 flex-col bg-linear-to-r from-[#f0f0ec] to-white pt-0.5">
            <ScrollButton dir="up" className="h-7" />
            <Thumb vertical className="mt-[96px] h-[92px]" />
            <ScrollButton dir="down" className="mt-auto h-7" />
          </div>
        </div>
        <div className="mr-[30px] flex h-7 shrink-0 items-stretch bg-[#f4f4f0] px-0.5 pt-0.5">
          <ScrollButton dir="left" className="w-[29px]" />
          <Thumb className="w-[322px]" />
          <ScrollButton dir="right" className="ml-auto w-[29px]" />
        </div>
      </div>
      <div className="h-1 shrink-0 bg-[#d0d0d0]" />
      <div className="flex h-[38px] shrink-0 items-center">
        <AddButton />
        <button aria-label="Remove" className="flex w-[39px] justify-center">{cross("#d8d8d8", 28)}</button>
        <button aria-label="Expand all" className="w-7">+</button>
        <button aria-label="Collapse all" className="w-7">-</button>
        <input aria-label="Search products" placeholder="Input to search" className={searchClass} />
        <ClearButton />
        <button aria-label="Warnings" className="flex w-9 justify-center">
          <Icon w={28} h={26}>
            <path d="M14 0 28 26H0Z" fill={TAN} stroke="none" />
            <path d="M14 8v9M14 19.500v3" stroke="#444" strokeWidth="3" />
          </Icon>
        </button>
        <button aria-label="Warning menu" className="flex w-7 justify-center">
          <Caret big />
        </button>
        <TableButton />
      </div>
      <div className="flex min-h-0 flex-1 flex-col border-2 border-[#8f949e]">
        <div className="flex min-h-0 flex-1">
          <div className="flex-1 overflow-hidden">
            <table className="w-full table-fixed border-collapse">
              <thead>
                <tr className="h-[37px] border-b-2 border-[#dfe3e6] bg-linear-to-b from-white to-[#f6f7f8]">
                  <th className="w-[367px] border-r-2 border-[#dfe3e6] pt-0.5 font-normal">Product</th>
                  <th />
                </tr>
              </thead>
              <tbody>
                <tr className="h-[37px]">
                  <td>
                    <div className="flex items-center pl-[11px]">
                      <Expander open />
                      <svg width="28" height="24" viewBox="0 0 28 24" className="mr-2.5 ml-1.5" aria-hidden="true">
                        <path d="M1 2h10l2 3h14v17H1Z" fill="#cfdde8" stroke="#b4c6d4" />
                        <path d="M4 12h7l2-3h13l-3 14H2Z" fill="#e6f0f7" stroke="#aabfd0" />
                      </svg>
                      Project Items
                    </div>
                  </td>
                  <td />
                </tr>
                {items.map(([k, t, n]) => (
                  <tr key={t} className="h-[37px] nth-[4n]:h-9">
                    <td className="overflow-hidden">
                      <div className="flex items-center pl-[39px]">
                        {k === "brown" || k === "orange" ? <Expander /> : <span className="w-4" />}
                        <span className="ml-1.5 flex">
                          <Swatch kind={k} />
                        </span>
                        <span className="ml-0.5 leading-7 whitespace-pre">{t}</span>
                      </div>
                    </td>
                    <td className="overflow-hidden pl-[11px] whitespace-nowrap">{n}</td>
                  </tr>
                ))}
              </tbody>
            </table>
          </div>
          <div className="mr-0.5 ml-0.5 flex w-7 flex-col bg-linear-to-r from-[#f0f0ec] to-white pt-0.5">
            <ScrollButton dir="up" className="h-[30px]" />
            <Thumb vertical className="mt-px h-[54px]" />
            <ScrollButton dir="down" className="mt-auto h-[30px]" />
          </div>
        </div>
        <div className="mr-[30px] flex h-[31px] shrink-0 items-stretch bg-[#f4f4f0] px-0.5 py-0.5">
          <ScrollButton dir="left" className="w-[29px]" />
          <Thumb className="w-[102px]" />
          <ScrollButton dir="right" className="ml-auto w-[29px]" />
        </div>
      </div>
      <Dots />
      <div className="flex h-[49px] shrink-0 items-center justify-end border-t-2 border-[#d2d4dc] bg-[#f4f4f4]">
        {panelIcons.map((ic, i) => (
          <button key={i} aria-label={`Panel ${i + 1}`} className={clsx("flex h-full w-14 items-center justify-center", i === 0 && "bg-[#eafffe]")}>
            {ic}
          </button>
        ))}
      </div>
    </aside>
  );
}

const Dots = () => (
  <div className="flex h-[9px] shrink-0 items-center justify-center gap-1 bg-[#f4f4f4]">
    {[0, 1, 2, 3, 4].map((i) => (
      <span key={i} className="h-[3px] w-[3px] bg-[#333]" />
    ))}
  </div>
);

const deco = (
  <g stroke="none">
    <path d="M0 17 19 0l10 7L11 24Z" fill={BLUE} />
    <path d="M20 19 28 10l11 9Z" fill={PURPLE} />
    <path d="M5 33 16 20l7 3v5L13 39Z" fill={TAN} />
  </g>
);

const panelIcons = [
  <Icon w={40} h={40}>
    <path d="M8 4h32v28h-3V7H8ZM4 8h31v28h-3V11H4ZM0 12h31v28H0Z" fill={TAN} stroke="none" />
    <path d="M13 12h7v8h-7Z" fill={GRAY} stroke="none" />
    <path d="M5 25h16v9H5Z" fill="white" stroke="none" />
    <path d="M7 26v7M10 26v7M13 26v7M16 26v7M19 26v7" stroke="#333" strokeWidth="1.500" />
  </Icon>,
  <Icon w={40} h={40}>
    <path d="M0 0h40v40H0Z" fill="#4d9fdc" stroke="none" />
    <g fill="#d9d9d9" stroke={GRAY} strokeWidth="1.500">
      <path d="M0 3 8 1l3 12-11 3ZM12 5l14-3 2 12-14 3ZM28 0h12v12l-9 2ZM0 20l12-3 3 12-13 3ZM17 19l12-3 2 12-12 3ZM31 16l9-2v12l-7 2ZM4 33l12-3 3 10H4ZM20 32l11-3 3 11H22ZM34 30l6-2v12h-4Z" />
    </g>
  </Icon>,
  <Icon w={40} h={40}>
    <path d="M0 0h9v25H0ZM11 0h9v14h-9ZM22 0h9v25h-9ZM33 0h7v25h-7ZM0 27h9v13H0ZM11 16h9v24h-9ZM22 27h9v13h-9ZM33 27h7v13h-7Z" fill={TAN} stroke="none" />
  </Icon>,
  <Icon w={42} h={40}>
    {deco}
    <rect x="23" y="23" width="17" height="16" fill="white" stroke={TAN} />
    <path d="M27 27v8M31 27v6M31 35v1M36 27v8" stroke="#444" />
  </Icon>,
  <Icon w={42} h={40}>
    {deco}
    <rect x="23" y="23" width="17" height="16" fill="white" />
    <path d="M28 28h8" stroke={GRAY} />
  </Icon>,
];

/* ---------- drawing area ---------- */

function Drawing() {
  const cols = Array.from({ length: 19 }, (_, i) => 100 + i * 145);
  const rows = Array.from({ length: 7 }, (_, i) => 59 + i * 145);
  return (
    <svg className="absolute inset-0 h-full w-full" aria-label="Floor plan">
      <g stroke="#d6d6d6" strokeWidth="2" strokeDasharray="10 5">
        {cols.map((x) => (
          <line key={x} x1={x} x2={x} y1="0" y2="100%" />
        ))}
        {rows.map((y) => (
          <line key={y} x1="0" x2="100%" y1={y} y2={y} />
        ))}
      </g>
      <line x1="2855" x2="2855" y1="0" y2="100%" stroke="#b9b9f0" strokeWidth="2" />
      <line x1="2855" x2="2855" y1="0" y2="100%" stroke="#1414e0" strokeWidth="2" strokeDasharray="10 5" />
      <rect x="891" y="258" width="562" height="465" fill="#ff8c00" stroke="black" strokeWidth="2" />
      <path d="m891 258 15 15M1453 258l-16 15M891 723l15-16M1453 723l-16-16" stroke="#ffb45a" />
      <rect x="906" y="273" width="531" height="434" fill="#afeeee" />
      <path
        d="M930 273v434M1027 273v434M1123 273v434M1220 273v434M1317 273v434M1413 273v434M906 345h531M906 442h531M906 538h531M906 635h531"
        stroke="#7c8f8f"
        strokeWidth="2"
      />
      <rect x="906" y="273" width="531" height="434" fill="none" stroke="#f60808" strokeWidth="4" />
      <g fill="#a00" stroke="black" strokeWidth="2">
        {[[906, 273], [1437, 273], [906, 707], [1437, 707], [1083, 418]].map(([x, y]) => (
          <rect key={`${x}-${y}`} x={x - 2} y={y - 2} width="4" height="4" />
        ))}
        {[[1172, 273], [1172, 707], [906, 490], [1437, 490]].map(([x, y]) => (
          <circle key={`${x}-${y}`} cx={x} cy={y} r="2" />
        ))}
      </g>
      <circle cx="1123" cy="538" r="5" fill="#e01020" />
      <circle cx="1123" cy="538" r="2" fill="#5010c0" />
      <g fill="#e01414" className="font-['DejaVu_Sans',sans-serif] text-[27px]">
        <text x="1137" y="307">11'0"</text>
        <text x="1082" y="446">Rm21</text>
        <text x="1376" y="505">9'0"</text>
      </g>
    </svg>
  );
}

const AddTab = () => (
  <button aria-label="Add">
    <Icon w={22} h={22}>
      <path d="M11 0v22M0 11h22" strokeWidth="3" />
    </Icon>
  </button>
);

function LayerTabs() {
  return (
    <div className="flex h-[30px] shrink-0 items-center bg-white pl-2">
      <Caret big />
      <div className="ml-3.5 flex items-center gap-[7px]">
        <AddTab />
        <button aria-label="Toggle visibility">
          <Icon w={24} h={22}>
            <path d="M1 12c5-9 17-9 22 0-5 8-17 8-22 0Z" stroke={TAN} />
            <circle cx="12" cy="12" r="4" />
            <path d="M2 21 21 1" stroke={RED} />
          </Icon>
        </button>
        <button aria-label="Import layer">
          <Icon w={24} h={22}>
            <rect x="1" y="1" width="22" height="20" stroke={GRAY} fill="white" />
            <path d="M0 2.500h24" strokeWidth="5" />
            <path d="M5 13h11M12 8l5 5-5 5" stroke="#444" />
          </Icon>
        </button>
        <button aria-label="History">
          <Icon w={24} h={24}>
            <circle cx="12" cy="12" r="10.500" stroke={GRAY} />
            <path d="M12 4v8l4 6" />
          </Icon>
        </button>
      </div>
      <span className="ml-2">
        <Caret dir="left" />
      </span>
      <button className="ml-6 h-[26px] bg-[#adff2f] leading-[28px] font-bold text-[#00006e]">Default*</button>
      <button className="ml-3 flex h-full w-[348px] items-center border-t-2 border-r-2 border-l border-[#a4a4a4] bg-linear-to-b from-[#f0f0f0] to-[#e4e4e4] pr-3 pl-[7px]">
        <span className="h-[22px] w-6 shrink-0 bg-[#ffa500]" />
        <span className="overflow-hidden pt-1 leading-7 whitespace-pre">ALTERNATE #7: BREAK #110 FLOO</span>
      </button>
      <button className="flex h-full w-[348px] items-center border-t-2 border-r-2 border-[#a4a4a4] bg-linear-to-b from-[#f0f0f0] to-[#e4e4e4] pr-1 pl-[9px]">
        <span className="h-[22px] w-6 shrink-0 bg-[#00ffff]" />
        <span className="overflow-hidden pt-1 leading-7 whitespace-pre">ALTERNATE #18:  PROVIDE AND I</span>
      </button>
      <span className="mr-2.5 ml-auto">
        <Caret dir="right" />
      </span>
    </div>
  );
}

const sheets: [string, string | null, string][] = [
  ["A100", null, "w-[67px]"],
  ["A201", null, "w-[69px]"],
  ["A400", "bg-[#0000ff]", "w-[93px]"],
  ["A600", "bg-[#008000]", "w-[93px]"],
  ["F100", "bg-[#ff0000]", "w-[90px]"],
  ["F201", "bg-[#ffff00]", "w-[89px]"],
  ["F301", "bg-[#0000ff]", "w-[89px]"],
];

function SheetTabs() {
  return (
    <div className="flex h-[30px] shrink-0 items-center bg-white pl-2">
      <Caret dir="up" big />
      <span className="ml-3.5 flex">
        <AddTab />
      </span>
      <span className="ml-[13px]">
        <Caret dir="left" />
      </span>
      <button className="ml-[23px] flex h-[25px] items-center self-end">
        <span className="h-full w-[25px] bg-[#ff0000]" />
        <span className="h-full w-14 bg-[#87ceeb] text-left leading-[28px] font-bold text-[#000080]">A000</span>
      </button>
      <div className="ml-3 flex h-full border-l-2 border-[#a4a4a4]">
        {sheets.map(([name, color, w]) => (
          <button key={name} className={clsx("flex h-full items-center justify-center border-r-2 border-[#a4a4a4] bg-linear-to-b from-[#f0f0f0] to-[#e4e4e4] pt-0.5", w)}>
            {color && <span className={clsx("h-[23px] w-[25px]", color)} />}
            <span className="h-[23px] bg-[#87ceeb] leading-[25px]">{name}</span>
          </button>
        ))}
      </div>
      <span className="mr-1.5 ml-auto">
        <Caret dir="right" />
      </span>
      <div className="flex h-full w-[263px] shrink-0 border-l-[5px] border-[#d0d0d0]">
        <ScrollButton dir="left" className="mt-0.5 w-[30px]" />
        <Thumb grip={false} className="mt-0.5 ml-6 w-[18px]" />
        <ScrollButton dir="right" className="mt-0.5 ml-auto w-[26px]" />
      </div>
      <div className="flex h-full w-[268px] shrink-0 items-center border-l-[5px] border-[#d0d0d0] pr-2 pl-2">
        <input
          type="range"
          aria-label="Zoom level"
          defaultValue={63}
          className="h-[5px] w-full appearance-none rounded-full border border-[#dcdace] border-t-[#a8a89c] bg-[#ece9dc] [&::-webkit-slider-thumb]:h-[30px] [&::-webkit-slider-thumb]:w-[18px] [&::-webkit-slider-thumb]:appearance-none [&::-webkit-slider-thumb]:rounded-t-sm [&::-webkit-slider-thumb]:border-2 [&::-webkit-slider-thumb]:border-[#9c9ca8] [&::-webkit-slider-thumb]:bg-[linear-gradient(#4fc04f_0px,#4fc04f_4px,#d4d4e0_4px)]"
        />
      </div>
    </div>
  );
}

function StatusBar() {
  return (
    <footer className="flex h-[35px] shrink-0 items-center bg-[#f4f4f4] pl-0.5">
      <span className="flex-1 pt-0.5">Ready</span>
      <div className="relative h-full w-[210px]">
        <select aria-label="Room" className="h-full w-full appearance-none border-2 border-[#acb0b8] bg-white pt-1 pl-[7px]">
          <option>Rm21</option>
        </select>
        <span className="pointer-events-none absolute top-3 right-3">
          <Icon w={10} h={8}>
            <path d="m1 1 4 5 4-5" stroke="#444" />
          </Icon>
        </span>
      </div>
      <span className="ml-2 w-[378px] pt-0.5 whitespace-nowrap">Selected: 1 Area: 98 SF Perimeter: 39'10"</span>
      <button aria-label="Expand status" className="ml-0.5">
        <Icon w={24} h={22}>
          <path d="M1 11 12 1l11 10M1 21l11-10 11 10" stroke="#222" />
        </Icon>
      </button>
      <button aria-label="Toggle frame" className="mr-1 ml-1 h-[22px] w-6 border-2 border-[#222]" />
    </footer>
  );
}

function Workspace() {
  return (
    <main className="flex min-w-0 flex-1 flex-col">
      <LayerTabs />
      <div className="flex min-h-0 flex-1 bg-white">
        <div className="relative flex-1 overflow-hidden">
          <Drawing />
          <button aria-label="Chat" className="absolute right-[60px] bottom-[57px] flex h-14 w-14 items-center justify-center rounded-full border-2 border-[#8fc8ee] bg-white">
            <Icon w={28} h={24}>
              <path d="M0 0h28v20h-3v4l-5-4H0Z" fill="#0a7cf8" stroke="none" />
              <path d="M4 5.500h10M16 5.500h7M4 10h6M13 10h11M4 14.500h5M11 14.500h4M17 14.500h7" stroke="white" />
            </Icon>
          </button>
        </div>
        <div className="flex w-7 flex-col bg-linear-to-r from-[#f4f3ee] to-white">
          <ScrollButton dir="up" className="h-[30px]" />
          <div className="flex flex-1 flex-col justify-center pb-[34px]">
            <Thumb vertical className="h-[30px]" />
          </div>
          <ScrollButton dir="down" className="h-[30px]" />
        </div>
      </div>
      <SheetTabs />
      <StatusBar />
    </main>
  );
}

const sideIcons = [
  { c: PURPLE, art: <g stroke="none"><path d="M4 14h16v15H4Z" fill={PURPLE} /><path d="M23 14h13v2H23ZM23 18h13v2H23ZM23 22h13v2H23ZM23 26h13v2H23Z" fill={GRAY} /></g> },
  { c: GREEN, art: <path d="M11 12v18l18-9Z" /> },
  { c: BLUE, art: <g><rect x="12" y="13" width="16" height="17" /><path d="M15 16h8v4h-8Z" fill="#b5b5b5" stroke="none" /></g> },
  { c: TAN, art: <g><rect x="9" y="11" width="23" height="20" stroke={GRAY} strokeWidth="1" /><path d="M9 28h10v3H9Z" fill="#4aa3b5" stroke="none" /></g> },
];

function RightRail() {
  return (
    <aside className="flex w-[55px] shrink-0 flex-col border-l-2 border-[#cfd1da] bg-[#f4f4f4]">
      <button aria-label="Expand panel" className="flex h-11 shrink-0 items-center justify-center border-y-2 border-[#cfd1da] bg-[#fafafa] pl-4">
        <PanelChevrons />
      </button>
      <div className="flex-1 border-b-2 border-[#d2d4dc]" />
      <Dots />
      {sideIcons.map((s, i) => (
        <button key={i} aria-label={`Side panel ${i + 1}`} className={clsx("flex h-[49px] shrink-0 items-center justify-center border-b-2 border-[#d2d4dc]", i === 0 && "bg-[#eafffe]")}>
          <Icon w={40} h={40}>
            <path d="M1 3v34a2 2 0 0 0 2 2h34a2 2 0 0 0 2-2V3" stroke={GRAY} fill="white" />
            <path d="M2 38h36" stroke={GRAY} strokeWidth="3" />
            <path d="M0 4h40" stroke={s.c} strokeWidth="7" />
            {s.art}
          </Icon>
        </button>
      ))}
      <div className="h-[49px] shrink-0" />
    </aside>
  );
}

export default function App() {
  return (
    <div className="flex h-screen w-full overflow-hidden bg-[#f5f5f5] font-['Open_Sans','Noto_Sans',sans-serif] text-[20px] leading-7 text-black">
      <div className="flex w-3 shrink-0 flex-col bg-[#333]">
        <div className="h-[358px] bg-black" />
        <div className="h-2.5 bg-[#6fd05f]" />
      </div>
      <div className="flex min-w-0 flex-1 flex-col">
        <TitleBar />
        <Tabs />
        <Ribbon />
        <div className="flex min-h-0 flex-1">
          <LeftPanel />
          <div className="w-[7px] shrink-0 bg-[#d0d0d0]" />
          <Workspace />
          <div className="w-1.5 shrink-0 bg-[#d0d0d0]" />
          <RightRail />
        </div>
        <div className="h-2.5 shrink-0 border-t-2 border-[#474a52] bg-linear-to-r from-[#14202a] via-[#151a58] via-15% to-[#3a1240]" />
      </div>
    </div>
  );
}
